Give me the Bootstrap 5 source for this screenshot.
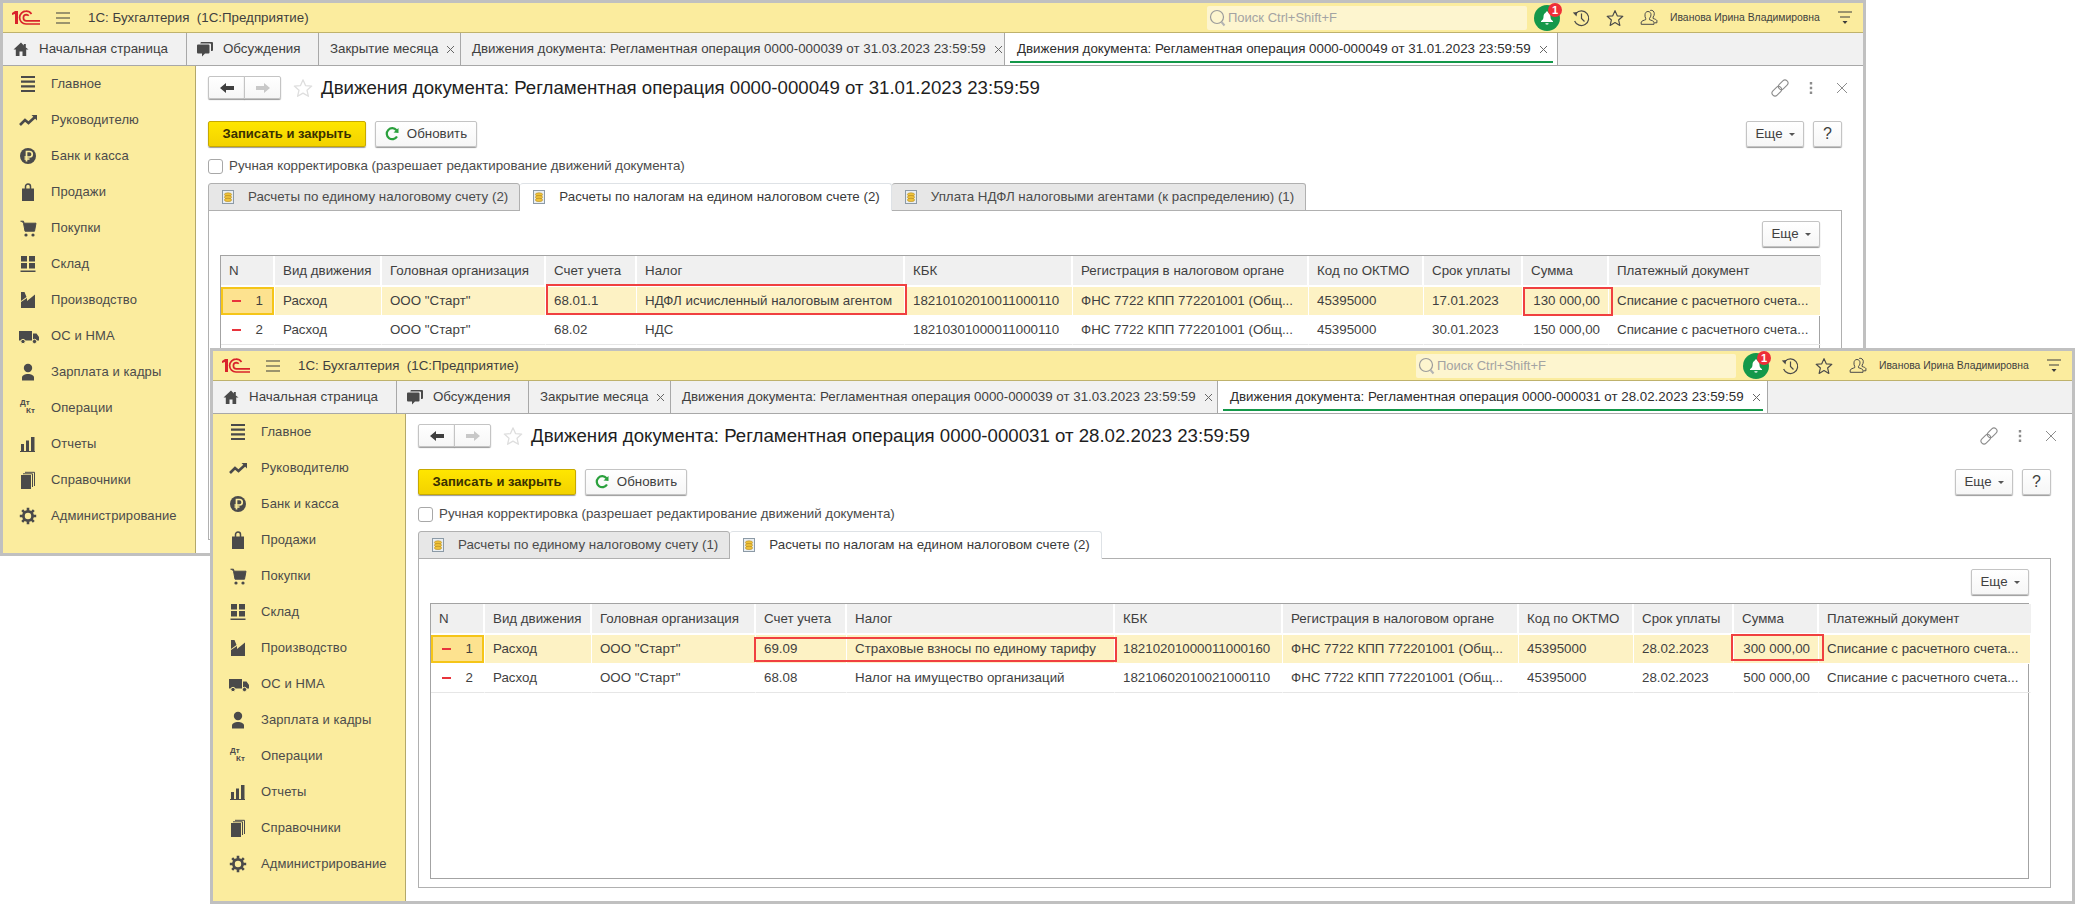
<!DOCTYPE html>
<html lang="ru">
<head>
<meta charset="utf-8">
<title>1С: Бухгалтерия</title>
<link href="https://cdn.jsdelivr.net/npm/bootstrap@5.3.0/dist/css/bootstrap.min.css" rel="stylesheet">
<style>
html,body{height:904px;overflow:hidden;background:#fff}
body{font-family:"Liberation Sans",Arial,sans-serif;font-size:13.33px;color:#3f3f3f;line-height:16px}
.desk{position:relative;width:2075px;height:904px;overflow:hidden}
.win{position:absolute;border:3px solid #c0c0c0;background:#fff;height:556px;display:flex;flex-direction:column}
.win-a{left:0;top:0;width:1866px}
.win-b{left:210px;top:348px;width:1865px}
.topbar{height:30px;flex:none;background:#fbec9e;padding:0 11px 0 8px;border-bottom:1px solid #bfb26c}
.logo{width:30px;height:15px;margin-right:15px}
.burger{width:14px;height:12px;margin-right:18px}
.apptitle{font-size:13.33px;color:#3f3f3f;white-space:pre}
.search{width:320px;height:24px;background:#fdf5cf;border-radius:2px;padding-left:2px;color:#a3a3a3;margin-right:7px;font-size:13px}
.search svg{width:18px;height:18px;margin-right:1px}
.bell{position:relative;width:26px;height:26px;border-radius:50%;background:#14984a;margin-right:12px}
.bell svg{width:16px;height:16px}
.bell-count{position:absolute;left:14px;top:-2px;width:14px;height:14px;border-radius:50%;background:#ee2e38;color:#fff;font-size:11px;font-weight:700;line-height:14px;text-align:center}
.topic{width:18px;height:18px;margin-right:16px;flex:none}
.topic-last{margin-right:12px}
.uname{font-size:10.4px;color:#3f3f3f;width:154px;white-space:nowrap;margin-right:14px}
.fnmenu{width:14px;height:14px;flex:none}
.strip{height:33px;flex:none;background:#f1f1f1;border-bottom:1px solid #a8a8a8;flex-wrap:nowrap}
.strip .nav-link{height:32px;display:flex;align-items:center;color:#3f3f3f;font-size:13.33px;border-right:1px solid #a8a8a8;padding:0;white-space:nowrap;position:relative}
.strip .nav-link.st-home{width:184px;padding-left:10px}
.strip .nav-link.st-disc{width:132px;padding-left:10px}
.strip .nav-link.st-close{width:142px;padding-left:11px}
.strip .nav-link.st-doc{width:544px;padding-left:11px}
.win-b .strip .nav-link.st-doc{width:547px}
.strip .nav-link.st-cur{width:553px;padding-left:12px;background:#fff;color:#2d2d2d}
.win-b .strip .nav-link.st-cur{width:550px}
.strip .nav-link.st-cur::after{content:"";position:absolute;left:5px;right:4px;bottom:2px;height:2px;background:#14984a}
.strip svg{flex:none}
.st-ic{width:16px;height:16px;margin-right:10px}
.st-x{width:9px;height:9px;margin-left:8px;color:#666}
.win-body{flex:1 1 auto;min-height:0}
.side{width:193px;flex:none;background:#fbec9e;border-right:1px solid #b3a86b}
.side .nav-link{height:36px;display:flex;align-items:center;padding:0 0 0 13px;color:#4b4b4b;font-size:13px;letter-spacing:.1px}
.side svg{width:24px;height:18px;margin-right:11px;flex:none;color:#4a4a4a}
.ledger{font-size:8px;font-weight:700;line-height:8px;width:24px;height:18px;margin-right:11px;flex:none;color:#4a4a4a;padding-left:4px}
.ledger span{display:block}
.ledger span+span{padding-left:6px}
.content{flex:1 1 auto;min-width:0;padding:10px 21px 13px 12px}
.headrow{height:23px;margin-bottom:22px;flex:none}
.hist.btn-group{width:73px;height:23px;margin-right:12px}
.btnx{font-size:13.33px;color:#3f3f3f;background:linear-gradient(#fff,#f6f6f6);border:1px solid #c4c4c4;box-shadow:0 1px 1px #9a9a9a;border-radius:2px;padding:0;display:flex;align-items:center;justify-content:center;height:26px;line-height:16px}
.hist .btnx{height:23px;width:37px;border-radius:2px}
.hist svg{width:14px;height:10px}
.hist .off{color:#c8c8c8}
.favstar{width:20px;height:20px;margin-right:8px;color:#dedede}
.doc-h{font-size:18.67px;line-height:24px;margin:0;color:#1e1e1e;font-weight:400;white-space:nowrap}
.hdtool{color:#8c8c8c;flex:none}
.gap-dots{margin-left:20px}
.gap-x{margin-left:23px;margin-right:-6px}
.toolrow{height:26px;margin-bottom:11px;flex:none}
.btn-save{width:158px;background:linear-gradient(#ffe600,#f3d200);border-color:#c7a900;color:#3a3000;margin-right:9px;font-weight:700;font-size:13px}
.btn-ref{width:102px}
.btn-ref svg{width:14px;height:14px;margin-right:8px;color:#2aa03c}
.btn-more{width:58px;margin-right:9px}
.btn-more.dropdown-toggle::after{border-top-width:3px;border-left-width:3px;border-right-width:3px;margin-left:6px;vertical-align:1px;color:#555}
.btn-help{width:29px;font-size:16px}
.manual{height:16px;margin-bottom:9px;flex:none;color:#4b4b4b;padding:0;min-height:0}
.manual .form-check-input{width:15px;height:15px;margin:0 6px 0 0;border:1px solid #a8a8a8;border-radius:3px;float:none;flex:none}
.ptabs{flex:none;height:28px;border-bottom:0;flex-wrap:nowrap}
.ptabs .nav-link{height:28px;margin:0;display:flex;align-items:center;padding:0 11px 0 13px;font-size:13.33px;color:#4b4b4b;background:#e7e7e7;border:1px solid #b0b0b0;border-left-width:0;border-radius:3px 3px 0 0;white-space:nowrap}
.ptabs .nav-item:first-child .nav-link{border-left-width:1px}
.ptabs .nav-link.active{background:#fff;border-bottom-color:#fff;color:#3a3a3a;position:relative;z-index:1}
.coin{width:12px;height:14px;margin-right:14px;flex:none}
.panel{flex:1 1 auto;min-height:0;border:1px solid #b0b0b0;margin-top:-1px;padding:10px 21px 8px 11px}
.paneltools{height:26px;margin-bottom:8px;flex:none}
.paneltools .btn-more{margin-right:0}
.gridbox{position:relative;flex:1 1 auto;min-height:0;border:1px solid #a3a3a3}
.grid-t.table{width:1600px;table-layout:fixed;margin:0;font-size:13.33px;--bs-table-bg:transparent;color:#3f3f3f;border-collapse:separate;border-spacing:0}
.grid-t th,.grid-t td{padding:0 8px;border:0;font-weight:400;white-space:nowrap;overflow:hidden;vertical-align:middle;color:#3f3f3f;box-shadow:none}
.grid-t th{height:31px;background:#f0f0f0;border-right:2px solid #fff;border-bottom:2px solid #fff}
.grid-t th:last-child{border-right:0}
.grid-t td{height:29px;border-right:1px solid #fff;border-bottom:1px solid #e6e6e6}
.grid-t tr.cur td{background:#fdf2c4;border-bottom-color:#fff}
.grid-t td.ncell{padding:0}
.grid-t tr.cur td.ncell{background:#fde28f;box-shadow:inset 0 0 0 2px #f5c518}
.nwrap{padding:0 11px 0 11px}
.minus{display:inline-block;width:9px;height:2px;background:#e8343c}
.num{text-align:right}
.redbox{position:absolute;border:2px solid #f04040;pointer-events:none}
.a1{left:325px;top:28px;width:361px;height:31px}
.a2{left:1302px;top:31px;width:90px;height:29px}
.b1{left:323px;top:33px;width:363px;height:25px}
.b2{left:1300px;top:30px;width:93px;height:27px}
.col-n{width:54px}.col-kind{width:107px}.col-org{width:164px}.col-acc{width:91px}.col-tax{width:268px}.col-kbk{width:168px}.col-reg{width:236px}.col-ok{width:115px}.col-term{width:99px}.col-sum{width:86px}.col-doc{width:212px}
.win-b .col-term{width:100px}.win-b .col-sum{width:85px}
</style>
</head>
<body>
<svg width="0" height="0" class="position-absolute">
<defs>
<symbol id="i-logo" viewBox="0 0 30 15">
<path d="M1 3 L4 1 H7 V14 H4 V4 L1 5Z" fill="#d9232b"/>
<g fill="none" stroke="#d9232b" stroke-width="1.7"><path d="M29 14 H15 A6.2 6.2 0 0 1 15 1.2 A6.5 6.5 0 0 1 20.500 4"/><path d="M29 10.800 H15.500 A3 3 0 0 1 15.500 4.600 A3 3 0 0 1 17.700 5.800"/></g>
</symbol>
<symbol id="i-burger" viewBox="0 0 14 12"><path d="M0 1h14M0 6h14M0 11h14" stroke="#3c3c3c" stroke-width="1.100" fill="none"/></symbol>
<symbol id="i-search" viewBox="0 0 18 18"><circle cx="8" cy="8" r="6.500" fill="none" stroke="#9b9b9b" stroke-width="1.200"/><path d="M12.500 13l3 3.500" stroke="#b4b4b4" stroke-width="2"/></symbol>
<symbol id="i-bell" viewBox="0 0 16 16"><path d="M8 1.500c-.8 0-1.300.6-1.300 1.200C4.900 3.400 4.500 5 4.500 7c0 2-1 3-2.500 4.200v.8h12v-.8C12.500 10 11.500 9 11.500 7c0-2-.4-3.600-2.200-4.300 0-.6-.5-1.200-1.300-1.200z" fill="#fff"/><path d="M6.300 13.300h3.400l-.6 1.200H6.900z" fill="#fff"/></symbol>
<symbol id="i-hist" viewBox="0 0 18 18"><path d="M4 4.300A7.300 7.300 0 1 1 2.600 12" fill="none" stroke="#4a4a4a" stroke-width="1.200"/><path d="M0.800 3.600l4.500-.6-.8 4.400z" fill="#4a4a4a"/><path d="M9.500 4.500v5l3 3" fill="none" stroke="#4a4a4a" stroke-width="1.200"/></symbol>
<symbol id="i-star" viewBox="0 0 20 20"><path d="M10 1.800l2.500 5.800 6.200.5-4.700 4.100 1.400 6.100L10 15.100l-5.400 3.200L6 12.200 1.300 8.100l6.200-.5z" fill="none" stroke="currentColor" stroke-width="1.300" stroke-linejoin="round"/></symbol>
<symbol id="i-users" viewBox="0 0 18 18"><path d="M8 2.500c1.900 0 3 1.500 3 3.300 0 1.500-.7 2.800-1.500 3.500v1.400c2 .6 4 1.300 4.500 2.300v2.300H1.200V13c.5-1 2.500-1.700 4.500-2.300V9.300C5 8.600 5 7.300 5 5.800 5 4 6.100 2.500 8 2.500z" fill="none" stroke="#4a4a4a" stroke-width="1"/><path d="M10.200 1.400c2.400-.6 4.100 1 4.100 3.300 0 1.400-.5 2.600-1.200 3.300v1.500c1.800.5 3.300 1.100 3.800 2v2.300h-2.400" fill="none" stroke="#4a4a4a" stroke-width="1"/></symbol>
<symbol id="i-fnmenu" viewBox="0 0 14 14"><path d="M0 1h14M2 6h10" stroke="#3c3c3c" stroke-width="1.100" fill="none"/><path d="M4.500 10h5L7 13z" fill="#3c3c3c"/></symbol>
<symbol id="i-home" viewBox="0 0 16 16"><path d="M8 1.500L0.500 8.500h2.300V15h3.700v-4.500h3V15h3.700V8.500h2.300L12.800 6.500V3h-2v1.600z" fill="#4a4a4a"/></symbol>
<symbol id="i-disc" viewBox="0 0 16 16"><path d="M4.500 1H15a1 1 0 0 1 1 1v7a1 1 0 0 1-1 1h-1V3.500a1 1 0 0 0-1-1H3.300C3.400 1.600 3.800 1 4.500 1z" fill="#4a4a4a"/><path d="M1 3.500h10.500a1 1 0 0 1 1 1v7a1 1 0 0 1-1 1H8L5 15.500v-3H1a1 1 0 0 1-1-1v-7a1 1 0 0 1 1-1z" fill="#4a4a4a"/></symbol>
<symbol id="i-x" viewBox="0 0 9 9"><path d="M1 1l7 7M8 1l-7 7" stroke="currentColor" stroke-width="1" fill="none"/></symbol>
<symbol id="s-list" viewBox="0 0 24 18"><path d="M5 2h14M5 6.700h14M5 11.300h14M5 16h14" stroke="currentColor" stroke-width="2.200" fill="none"/></symbol>
<symbol id="s-trend" viewBox="0 0 24 18"><path d="M4 14l5-5 3.500 3L19 6" stroke="currentColor" stroke-width="2.600" fill="none"/><path d="M15.500 4H21v5.500z" fill="currentColor"/></symbol>
<symbol id="s-rub" viewBox="0 0 24 18"><circle cx="12" cy="9" r="8" fill="currentColor"/><path d="M10.500 14.500V4.500h3a2.700 2.700 0 0 1 0 5.500h-5M8.500 12h5" stroke="#fbec9e" stroke-width="1.700" fill="none"/></symbol>
<symbol id="s-bag" viewBox="0 0 24 18"><path d="M6 5.500h12V18H6z" fill="currentColor"/><path d="M9.500 8V3.500a2.500 2.500 0 0 1 5 0V8" stroke="currentColor" stroke-width="1.500" fill="none"/></symbol>
<symbol id="s-cart" viewBox="0 0 24 18"><path d="M4.500 2.200h3l.5 2H20l-1.500 8H9l-1.500-8" fill="currentColor" stroke="currentColor" stroke-width="1"/><circle cx="10" cy="16" r="1.600" fill="currentColor"/><circle cx="17" cy="16" r="1.600" fill="currentColor"/></symbol>
<symbol id="s-grid" viewBox="0 0 24 18"><path d="M5 1h6v5.500H5zM13 1h6v5.500h-6zM5 8h6v5.500H5zM13 8h6v5.500h-6zM4.500 15.500h15V17h-15z" fill="currentColor"/></symbol>
<symbol id="s-fact" viewBox="0 0 24 18"><path d="M5 1h3.500l2 5-5.500 4zM5 11l6-4v3l8-6.500V17H5z" fill="currentColor"/></symbol>
<symbol id="s-truck" viewBox="0 0 24 18"><path d="M3 4h13v9.500H3zM17 6.500h3.500L23 10v3.500h-6z" fill="currentColor"/><circle cx="7" cy="14.500" r="2.200" fill="currentColor" stroke="#fbec9e"/><circle cx="18.500" cy="14.500" r="2.200" fill="currentColor" stroke="#fbec9e"/></symbol>
<symbol id="s-user" viewBox="0 0 24 18"><circle cx="12" cy="5" r="4.200" fill="currentColor"/><path d="M6 17.500v-3c0-2 3-3.500 6-3.500s6 1.500 6 3.500v3z" fill="currentColor"/></symbol>
<symbol id="s-bars" viewBox="0 0 24 18"><path d="M5 9h3v7H5zM10 5.500h3V16h-3zM15 2h3.500v14H15zM4 16h15v1H4z" fill="currentColor"/></symbol>
<symbol id="s-book" viewBox="0 0 24 18"><path d="M5 4h10v14H5z" fill="currentColor"/><path d="M7 2.800h9.500V16M9 1.300h9.500V15" stroke="currentColor" fill="none"/></symbol>
<symbol id="s-gear" viewBox="0 0 24 18"><circle cx="12" cy="9" r="4.600" fill="none" stroke="currentColor" stroke-width="2.800"/><path d="M12 .8v3M12 14.200v3M3.800 9h3M17.200 9h3M6.200 3.200l2.100 2.100M15.700 12.700l2.100 2.100M17.800 3.200l-2.100 2.100M8.300 12.700l-2.100 2.100" stroke="currentColor" stroke-width="2.600"/></symbol>
<symbol id="i-left" viewBox="0 0 14 10"><path d="M0 5l6-5v3h8v4H6v3z" fill="currentColor"/></symbol>
<symbol id="i-right" viewBox="0 0 14 10"><path d="M14 5L8 0v3H0v4h8v3z" fill="currentColor"/></symbol>
<symbol id="i-refresh" viewBox="0 0 14 14"><path d="M11.500 3.200A5.500 5.500 0 1 0 12 9.500" fill="none" stroke="currentColor" stroke-width="2.200"/><path d="M8.500 5.500L13.500 1v5z" fill="currentColor"/></symbol>
<symbol id="i-link" viewBox="0 0 18 18"><g fill="none" stroke="currentColor" stroke-width="1.100" transform="rotate(-45 9 9)"><rect x="-1" y="6" width="11" height="6" rx="3"/><rect x="8" y="6" width="11" height="6" rx="3"/></g></symbol>
<symbol id="i-dots" viewBox="0 0 4 14"><path d="M.8 1h2.400v2.400H.8zM.8 5.800h2.400v2.400H.8zM.8 10.600h2.400V13H.8z" fill="currentColor"/></symbol>
<symbol id="i-close" viewBox="0 0 12 12"><path d="M1 1l10 10M11 1L1 11" stroke="currentColor" stroke-width="1" fill="none"/></symbol>
<symbol id="i-coin" viewBox="0 0 12 14"><rect x=".5" y=".5" width="11" height="13" fill="#e9eef2" stroke="#8c9aa6"/><ellipse cx="6" cy="4.500" rx="3.600" ry="1.700" fill="#efc23a" stroke="#b38a1c" stroke-width=".6"/><ellipse cx="6" cy="7.200" rx="3.600" ry="1.700" fill="#efc23a" stroke="#b38a1c" stroke-width=".6"/><ellipse cx="6" cy="9.900" rx="3.600" ry="1.700" fill="#efc23a" stroke="#b38a1c" stroke-width=".6"/></symbol>
</defs>
</svg>

<div class="desk">

<!-- Окно 1 -->
<section class="win win-a">
  <header class="topbar d-flex align-items-center">
    <svg class="logo"><use href="#i-logo"/></svg>
    <svg class="burger"><use href="#i-burger"/></svg>
    <span class="apptitle">1С: Бухгалтерия  (1С:Предприятие)</span>
    <div class="search d-flex align-items-center ms-auto"><svg><use href="#i-search"/></svg>Поиск Ctrl+Shift+F</div>
    <div class="bell d-flex align-items-center justify-content-center"><svg><use href="#i-bell"/></svg><span class="bell-count">1</span></div>
    <svg class="topic"><use href="#i-hist"/></svg>
    <svg class="topic" color="#4a4a4a"><use href="#i-star"/></svg>
    <svg class="topic topic-last"><use href="#i-users"/></svg>
    <span class="uname">Иванова Ирина Владимировна</span>
    <svg class="fnmenu"><use href="#i-fnmenu"/></svg>
  </header>
  <nav class="nav strip">
    <a class="nav-link st-home" href="#"><svg class="st-ic"><use href="#i-home"/></svg>Начальная страница</a>
    <a class="nav-link st-disc" href="#"><svg class="st-ic"><use href="#i-disc"/></svg>Обсуждения</a>
    <a class="nav-link st-close" href="#">Закрытие месяца<svg class="st-x"><use href="#i-x"/></svg></a>
    <a class="nav-link st-doc" href="#">Движения документа: Регламентная операция 0000-000039 от 31.03.2023 23:59:59<svg class="st-x"><use href="#i-x"/></svg></a>
    <a class="nav-link st-cur" href="#">Движения документа: Регламентная операция 0000-000049 от 31.01.2023 23:59:59<svg class="st-x"><use href="#i-x"/></svg></a>
  </nav>
  <div class="win-body d-flex">
    <aside class="side">
      <nav class="nav flex-column">
        <a class="nav-link" href="#"><svg><use href="#s-list"/></svg>Главное</a>
        <a class="nav-link" href="#"><svg><use href="#s-trend"/></svg>Руководителю</a>
        <a class="nav-link" href="#"><svg><use href="#s-rub"/></svg>Банк и касса</a>
        <a class="nav-link" href="#"><svg><use href="#s-bag"/></svg>Продажи</a>
        <a class="nav-link" href="#"><svg><use href="#s-cart"/></svg>Покупки</a>
        <a class="nav-link" href="#"><svg><use href="#s-grid"/></svg>Склад</a>
        <a class="nav-link" href="#"><svg><use href="#s-fact"/></svg>Производство</a>
        <a class="nav-link" href="#"><svg><use href="#s-truck"/></svg>ОС и НМА</a>
        <a class="nav-link" href="#"><svg><use href="#s-user"/></svg>Зарплата и кадры</a>
        <a class="nav-link" href="#"><div class="ledger"><span>Дт</span><span>Кт</span></div>Операции</a>
        <a class="nav-link" href="#"><svg><use href="#s-bars"/></svg>Отчеты</a>
        <a class="nav-link" href="#"><svg><use href="#s-book"/></svg>Справочники</a>
        <a class="nav-link" href="#"><svg><use href="#s-gear"/></svg>Администрирование</a>
      </nav>
    </aside>
    <main class="content d-flex flex-column">
      <div class="headrow d-flex align-items-center">
        <div class="btn-group hist"><button class="btn btnx"><svg><use href="#i-left"/></svg></button><button class="btn btnx off"><svg><use href="#i-right"/></svg></button></div>
        <svg class="favstar"><use href="#i-star"/></svg>
        <h1 class="doc-h">Движения документа: Регламентная операция 0000-000049 от 31.01.2023 23:59:59</h1>
        <svg class="hdtool ms-auto" width="18" height="18"><use href="#i-link"/></svg>
        <svg class="hdtool gap-dots" width="4" height="14"><use href="#i-dots"/></svg>
        <svg class="hdtool gap-x" width="12" height="12"><use href="#i-close"/></svg>
      </div>
      <div class="toolrow d-flex">
        <button class="btn btnx btn-save">Записать и закрыть</button>
        <button class="btn btnx btn-ref"><svg><use href="#i-refresh"/></svg>Обновить</button>
        <button class="btn btnx btn-more dropdown-toggle ms-auto">Еще</button>
        <button class="btn btnx btn-help">?</button>
      </div>
      <div class="form-check manual d-flex align-items-center"><input class="form-check-input" type="checkbox" id="m1"><label class="form-check-label" for="m1">Ручная корректировка (разрешает редактирование движений документа)</label></div>
      <ul class="nav nav-tabs ptabs">
        <li class="nav-item"><a class="nav-link" href="#"><svg class="coin"><use href="#i-coin"/></svg>Расчеты по единому налоговому счету (2)</a></li>
        <li class="nav-item"><a class="nav-link active" href="#"><svg class="coin"><use href="#i-coin"/></svg>Расчеты по налогам на едином налоговом счете (2)</a></li>
        <li class="nav-item"><a class="nav-link" href="#"><svg class="coin"><use href="#i-coin"/></svg>Уплата НДФЛ налоговыми агентами (к распределению) (1)</a></li>
      </ul>
      <div class="panel d-flex flex-column">
        <div class="paneltools d-flex justify-content-end"><button class="btn btnx btn-more dropdown-toggle">Еще</button></div>
        <div class="gridbox">
          <table class="table grid-t">
            <colgroup><col class="col-n"><col class="col-kind"><col class="col-org"><col class="col-acc"><col class="col-tax"><col class="col-kbk"><col class="col-reg"><col class="col-ok"><col class="col-term"><col class="col-sum"><col class="col-doc"></colgroup>
            <thead><tr><th>N</th><th>Вид движения</th><th>Головная организация</th><th>Счет учета</th><th>Налог</th><th>КБК</th><th>Регистрация в налоговом органе</th><th>Код по ОКТМО</th><th>Срок уплаты</th><th>Сумма</th><th>Платежный документ</th></tr></thead>
            <tbody>
              <tr class="cur"><td class="ncell"><div class="nwrap d-flex align-items-center justify-content-between"><i class="minus"></i><span>1</span></div></td><td>Расход</td><td>ООО "Старт"</td><td>68.01.1</td><td>НДФЛ исчисленный налоговым агентом</td><td>18210102010011000110</td><td>ФНС 7722 КПП 772201001 (Общ...</td><td>45395000</td><td>17.01.2023</td><td class="num">130 000,00</td><td>Списание с расчетного счета...</td></tr>
              <tr><td class="ncell"><div class="nwrap d-flex align-items-center justify-content-between"><i class="minus"></i><span>2</span></div></td><td>Расход</td><td>ООО "Старт"</td><td>68.02</td><td>НДС</td><td>18210301000011000110</td><td>ФНС 7722 КПП 772201001 (Общ...</td><td>45395000</td><td>30.01.2023</td><td class="num">150 000,00</td><td>Списание с расчетного счета...</td></tr>
            </tbody>
          </table>
          <div class="redbox a1"></div><div class="redbox a2"></div>
        </div>
      </div>
    </main>
  </div>
</section>

<!-- Окно 2 -->
<section class="win win-b">
  <header class="topbar d-flex align-items-center">
    <svg class="logo"><use href="#i-logo"/></svg>
    <svg class="burger"><use href="#i-burger"/></svg>
    <span class="apptitle">1С: Бухгалтерия  (1С:Предприятие)</span>
    <div class="search d-flex align-items-center ms-auto"><svg><use href="#i-search"/></svg>Поиск Ctrl+Shift+F</div>
    <div class="bell d-flex align-items-center justify-content-center"><svg><use href="#i-bell"/></svg><span class="bell-count">1</span></div>
    <svg class="topic"><use href="#i-hist"/></svg>
    <svg class="topic" color="#4a4a4a"><use href="#i-star"/></svg>
    <svg class="topic topic-last"><use href="#i-users"/></svg>
    <span class="uname">Иванова Ирина Владимировна</span>
    <svg class="fnmenu"><use href="#i-fnmenu"/></svg>
  </header>
  <nav class="nav strip">
    <a class="nav-link st-home" href="#"><svg class="st-ic"><use href="#i-home"/></svg>Начальная страница</a>
    <a class="nav-link st-disc" href="#"><svg class="st-ic"><use href="#i-disc"/></svg>Обсуждения</a>
    <a class="nav-link st-close" href="#">Закрытие месяца<svg class="st-x"><use href="#i-x"/></svg></a>
    <a class="nav-link st-doc" href="#">Движения документа: Регламентная операция 0000-000039 от 31.03.2023 23:59:59<svg class="st-x"><use href="#i-x"/></svg></a>
    <a class="nav-link st-cur" href="#">Движения документа: Регламентная операция 0000-000031 от 28.02.2023 23:59:59<svg class="st-x"><use href="#i-x"/></svg></a>
  </nav>
  <div class="win-body d-flex">
    <aside class="side">
      <nav class="nav flex-column">
        <a class="nav-link" href="#"><svg><use href="#s-list"/></svg>Главное</a>
        <a class="nav-link" href="#"><svg><use href="#s-trend"/></svg>Руководителю</a>
        <a class="nav-link" href="#"><svg><use href="#s-rub"/></svg>Банк и касса</a>
        <a class="nav-link" href="#"><svg><use href="#s-bag"/></svg>Продажи</a>
        <a class="nav-link" href="#"><svg><use href="#s-cart"/></svg>Покупки</a>
        <a class="nav-link" href="#"><svg><use href="#s-grid"/></svg>Склад</a>
        <a class="nav-link" href="#"><svg><use href="#s-fact"/></svg>Производство</a>
        <a class="nav-link" href="#"><svg><use href="#s-truck"/></svg>ОС и НМА</a>
        <a class="nav-link" href="#"><svg><use href="#s-user"/></svg>Зарплата и кадры</a>
        <a class="nav-link" href="#"><div class="ledger"><span>Дт</span><span>Кт</span></div>Операции</a>
        <a class="nav-link" href="#"><svg><use href="#s-bars"/></svg>Отчеты</a>
        <a class="nav-link" href="#"><svg><use href="#s-book"/></svg>Справочники</a>
        <a class="nav-link" href="#"><svg><use href="#s-gear"/></svg>Администрирование</a>
      </nav>
    </aside>
    <main class="content d-flex flex-column">
      <div class="headrow d-flex align-items-center">
        <div class="btn-group hist"><button class="btn btnx"><svg><use href="#i-left"/></svg></button><button class="btn btnx off"><svg><use href="#i-right"/></svg></button></div>
        <svg class="favstar"><use href="#i-star"/></svg>
        <h1 class="doc-h">Движения документа: Регламентная операция 0000-000031 от 28.02.2023 23:59:59</h1>
        <svg class="hdtool ms-auto" width="18" height="18"><use href="#i-link"/></svg>
        <svg class="hdtool gap-dots" width="4" height="14"><use href="#i-dots"/></svg>
        <svg class="hdtool gap-x" width="12" height="12"><use href="#i-close"/></svg>
      </div>
      <div class="toolrow d-flex">
        <button class="btn btnx btn-save">Записать и закрыть</button>
        <button class="btn btnx btn-ref"><svg><use href="#i-refresh"/></svg>Обновить</button>
        <button class="btn btnx btn-more dropdown-toggle ms-auto">Еще</button>
        <button class="btn btnx btn-help">?</button>
      </div>
      <div class="form-check manual d-flex align-items-center"><input class="form-check-input" type="checkbox" id="m2"><label class="form-check-label" for="m2">Ручная корректировка (разрешает редактирование движений документа)</label></div>
      <ul class="nav nav-tabs ptabs">
        <li class="nav-item"><a class="nav-link" href="#"><svg class="coin"><use href="#i-coin"/></svg>Расчеты по единому налоговому счету (1)</a></li>
        <li class="nav-item"><a class="nav-link active" href="#"><svg class="coin"><use href="#i-coin"/></svg>Расчеты по налогам на едином налоговом счете (2)</a></li>
      </ul>
      <div class="panel d-flex flex-column">
        <div class="paneltools d-flex justify-content-end"><button class="btn btnx btn-more dropdown-toggle">Еще</button></div>
        <div class="gridbox">
          <table class="table grid-t">
            <colgroup><col class="col-n"><col class="col-kind"><col class="col-org"><col class="col-acc"><col class="col-tax"><col class="col-kbk"><col class="col-reg"><col class="col-ok"><col class="col-term"><col class="col-sum"><col class="col-doc"></colgroup>
            <thead><tr><th>N</th><th>Вид движения</th><th>Головная организация</th><th>Счет учета</th><th>Налог</th><th>КБК</th><th>Регистрация в налоговом органе</th><th>Код по ОКТМО</th><th>Срок уплаты</th><th>Сумма</th><th>Платежный документ</th></tr></thead>
            <tbody>
              <tr class="cur"><td class="ncell"><div class="nwrap d-flex align-items-center justify-content-between"><i class="minus"></i><span>1</span></div></td><td>Расход</td><td>ООО "Старт"</td><td>69.09</td><td>Страховые взносы по единому тарифу</td><td>18210201000011000160</td><td>ФНС 7722 КПП 772201001 (Общ...</td><td>45395000</td><td>28.02.2023</td><td class="num">300 000,00</td><td>Списание с расчетного счета...</td></tr>
              <tr><td class="ncell"><div class="nwrap d-flex align-items-center justify-content-between"><i class="minus"></i><span>2</span></div></td><td>Расход</td><td>ООО "Старт"</td><td>68.08</td><td>Налог на имущество организаций</td><td>18210602010021000110</td><td>ФНС 7722 КПП 772201001 (Общ...</td><td>45395000</td><td>28.02.2023</td><td class="num">500 000,00</td><td>Списание с расчетного счета...</td></tr>
            </tbody>
          </table>
          <div class="redbox b1"></div><div class="redbox b2"></div>
        </div>
      </div>
    </main>
  </div>
</section>

</div>
<script src="https://cdn.jsdelivr.net/npm/bootstrap@5.3.0/dist/js/bootstrap.bundle.min.js"></script>
</body>
</html>
